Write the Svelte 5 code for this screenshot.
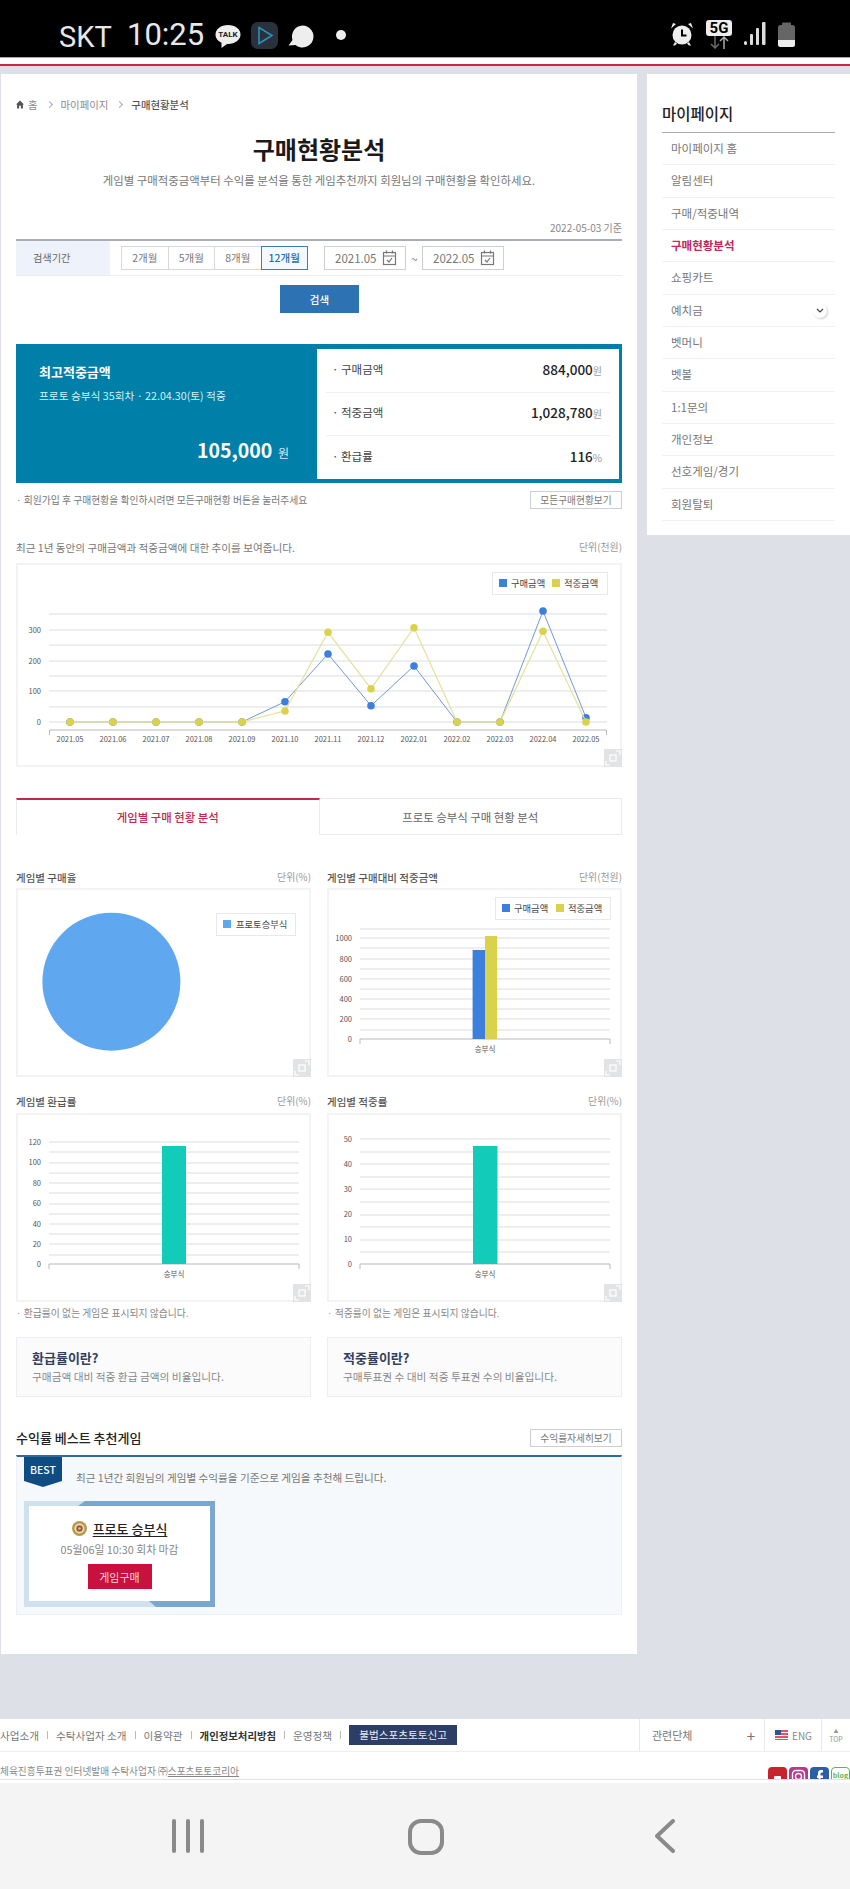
<script>
	const blue = "#3c7fdc";
	const yellow = "#dbd24c";
	const teal = "#13cbb9";

	const menu = ["마이페이지 홈", "알림센터", "구매/적중내역", "구매현황분석", "쇼핑카트", "예치금", "벳머니", "벳볼", "1:1문의", "개인정보", "선호게임/경기", "회원탈퇴"];
	const months = ["2021.05", "2021.06", "2021.07", "2021.08", "2021.09", "2021.10", "2021.11", "2021.12", "2022.01", "2022.02", "2022.03", "2022.04", "2022.05"];
	const buyY = [722, 722, 722, 722, 722, 701.7, 654, 705.7, 666, 722, 722, 611, 717.7];
	const winY = [722, 722, 722, 722, 722, 711, 632.3, 688.7, 627.7, 722, 722, 631.3, 722];
	const pts = (ys) => ys.map((y, i) => `${70 + i * 43},${y}`).join(" ");

	const lineGrid = [614, 630, 645, 661, 676, 691, 707, 722];
	const lineLabels = [["300", 630], ["200", 661], ["100", 691], ["0", 722]];

	const charts = [
		{
			title: "게임별 구매율", unit: "단위(%)", box: [16, 888], pie: true
		},
		{
			title: "게임별 구매대비 적중금액", unit: "단위(천원)", box: [327, 888],
			x1: 360, x2: 610, axis: 1039, catX: 485, catY: 1049, labelX: 352,
			grid: [929, 938, 948, 959, 969, 979, 989, 999, 1009, 1019, 1030],
			labels: [["1000", 938], ["800", 959], ["600", 979], ["400", 999], ["200", 1019], ["0", 1039]],
			bars: [[472.6, 12.4, 950, blue], [485, 12.2, 936, yellow]],
			legend: true
		},
		{
			title: "게임별 환급률", unit: "단위(%)", box: [16, 1113],
			x1: 49, x2: 299, axis: 1264, catX: 174, catY: 1274, labelX: 41,
			grid: [1142, 1152, 1163, 1173, 1183, 1193, 1204, 1214, 1224, 1234, 1244, 1255],
			labels: [["120", 1142], ["100", 1162], ["80", 1183], ["60", 1203], ["40", 1224], ["20", 1244], ["0", 1264]],
			bars: [[162, 24, 1146, teal]],
			note: "환급률이 없는 게임은 표시되지 않습니다."
		},
		{
			title: "게임별 적중률", unit: "단위(%)", box: [327, 1113],
			x1: 360, x2: 610, axis: 1264, catX: 485, catY: 1274, labelX: 352,
			grid: [1139, 1152, 1164, 1177, 1189, 1202, 1215, 1227, 1240, 1252],
			labels: [["50", 1139], ["40", 1164], ["30", 1189], ["20", 1214], ["10", 1239], ["0", 1264]],
			bars: [[473, 24.5, 1146, teal]],
			note: "적중률이 없는 게임은 표시되지 않습니다."
		}
	];

	const summary = [
		{ label: "구매금액", value: "884,000", unit: "원" },
		{ label: "적중금액", value: "1,028,780", unit: "원" },
		{ label: "환급률", value: "116", unit: "%" }
	];
</script>

{#snippet expand()}
	<span class="expand">
		<svg width="18" height="18" viewBox="0 0 18 18" fill="none" stroke="#fff" stroke-width="1.2">
			<rect x="6" y="6" width="6" height="6" />
			<path d="M2 12v4h4M12 2h4v4" />
		</svg>
	</span>
{/snippet}

{#snippet calendar()}
	<svg width="15" height="16" viewBox="0 0 15 16" fill="none" stroke="#777" stroke-width="1.2">
		<rect x="1.5" y="2.5" width="12" height="12" />
		<path d="M1.5 6h12M4.5 .5v3M10.5 .5v3M5 10l2 2 3-4" />
	</svg>
{/snippet}

<div class="page">
	<header class="status">
		<span class="carrier">SKT</span>
		<span class="clock">10:25</span>
		<span class="talk">
			<svg width="26" height="25" viewBox="0 0 26 25"><path d="M13 1C6 1 .5 5 .5 10.5c0 3.800 2.500 6.700 6 8.200L6.500 24l5.500-4.100h1c7 0 12.500-4 12.500-9.400S20 1 13 1z" fill="#eee" /></svg>
			<b>TALK</b>
		</span>
		<span class="play">
			<svg width="27" height="27" viewBox="0 0 27 27"><rect width="27" height="27" rx="7" fill="#28313c" /><path d="M8 5.500l13 8-13 8z" fill="none" stroke="#2f8fb5" stroke-width="1.6" /></svg>
		</span>
		<svg class="bubble" width="26" height="23" viewBox="0 0 26 23"><path d="M14.500 .5a11 11 0 1 1-7 19.500L.500 20.500 4.500 15a11 11 0 0 1 10-14.500z" fill="#eee" /></svg>
		<span class="dot"></span>
		<span class="status-right">
			<svg width="24" height="24" viewBox="0 0 24 24" fill="#eee">
				<circle cx="12" cy="13" r="9.500" />
				<path d="M1 6.500L6 2 3 1zM23 6.500L18 2l3-1zM5 20l-2 3.500h2l2-2zM19 20l2 3.500h-2l-2-2z" />
				<path d="M12 7.500V13.500H16.500" fill="none" stroke="#000" stroke-width="2" />
			</svg>
			<span class="net">
				<b>5G</b>
				<svg width="24" height="13" viewBox="0 0 24 13" fill="none" stroke-width="1.500">
					<path d="M8 0v12M4 8l4 4 4-4" stroke="#6a6a6a" />
					<path d="M17 13V1M13 5l4-4 4 4" stroke="#aaa" />
				</svg>
			</span>
			<svg width="22" height="24" viewBox="0 0 22 24" fill="#ddd">
				<rect x="0" y="19" width="3" height="4" rx="1.500" />
				<rect x="6" y="12" width="3" height="11" rx="1" />
				<rect x="12" y="6" width="3" height="17" rx="1" />
				<rect x="18" y="0" width="3.500" height="23" rx="1" />
			</svg>
			<svg width="17" height="25" viewBox="0 0 17 25">
				<path d="M4 3V1.500a1 1 0 0 1 1-1h7a1 1 0 0 1 1 1V3h1.500A2.500 2.500 0 0 1 17 5.500V18H0V5.500A2.500 2.500 0 0 1 2.500 3z" fill="#666" />
				<path d="M0 18h17v4.500a2.500 2.500 0 0 1-2.500 2.500h-12A2.500 2.500 0 0 1 0 22.500z" fill="#eee" />
			</svg>
		</span>
	</header>
	<div class="topline"></div>

	<div class="layout">
		<main class="main">
			<nav class="crumbs">
				<svg width="8" height="9" viewBox="0 0 9 9" fill="#555"><path d="M4.500 0L9 4.500H7.800V9H5.500V6h-2v3H1.200V4.500H0z" /></svg>
				<span>홈</span>
				<i></i>
				<span>마이페이지</span>
				<i></i>
				<b>구매현황분석</b>
			</nav>
			<h1>구매현황분석</h1>
			<p class="lead">게임별 구매적중금액부터 수익를 분석을 통한 게임추천까지 회원님의 구매현황을 확인하세요.</p>
			<div class="asof">2022-05-03 기준</div>

			<div class="search">
				<div class="search-label">검색기간</div>
				<div class="periods">
					<span>2개월</span><span>5개월</span><span>8개월</span><span class="on">12개월</span>
				</div>
				<div class="date">2021.05 {@render calendar()}</div>
				<span class="tilde">~</span>
				<div class="date">2022.05 {@render calendar()}</div>
			</div>
			<button class="go">검색</button>

			<section class="panel">
				<div class="best">
					<strong>최고적중금액</strong>
					<small>프로토 승부식 35회차 · 22.04.30(토) 적중</small>
					<div class="best-amount"><b>105,000</b> <span>원</span></div>
				</div>
				<ul class="totals">
					{#each summary as row}
						<li><span>· {row.label}</span><span class="num"><b>{row.value}</b><em>{row.unit}</em></span></li>
					{/each}
				</ul>
			</section>

			<div class="note-row">
				<span>· 회원가입 후 구매현황을 확인하시려면 모든구매현황 버튼을 눌러주세요</span>
				<button class="ghost">모든구매현황보기</button>
			</div>

			<div class="caption"><span>최근 1년 동안의 구매금액과 적중금액에 대한 추이를 보여줍니다.</span><span class="unit">단위(천원)</span></div>

			<div class="box line-box">
				<svg width="606" height="204" viewBox="16 563 606 204">
					<rect x="492.500" y="572.500" width="115" height="22" fill="#fff" stroke="#e6e8ec" />
					<rect x="499" y="579" width="8" height="8" fill={blue} />
					<text x="511" y="587" class="lg">구매금액</text>
					<rect x="552" y="579" width="8" height="8" fill={yellow} />
					<text x="564" y="587" class="lg">적중금액</text>
					{#each lineGrid as y}
						<line x1="49" x2="607" y1={y} y2={y} stroke="#e6e8ea" stroke-width="1.300" />
					{/each}
					{#each lineLabels as [t, y]}
						<text x="41" y={y + 3} text-anchor="end" class="tick">{t}</text>
					{/each}
					<path d="M49.500 735v-5h557v5" fill="none" stroke="#b5b9bd" />
					{#each months as m, i}
						<text x={70 + i * 43} y="742" text-anchor="middle" class="tick">{m}</text>
					{/each}
					<polyline points={pts(buyY)} fill="none" stroke="#6f9bd3" />
					{#each buyY as y, i}
						<circle cx={70 + i * 43} cy={y} r="3.800" fill={blue} />
					{/each}
					<polyline points={pts(winY)} fill="none" stroke="#e6e3a2" stroke-width="1.300" />
					{#each winY as y, i}
						<circle cx={70 + i * 43} cy={y} r="3.800" fill={yellow} />
					{/each}
				</svg>
				{@render expand()}
			</div>

			<div class="tabs">
				<span class="tab active">게임별 구매 현황 분석</span>
				<span class="tab">프로토 승부식 구매 현황 분석</span>
			</div>

			<div class="chart-grid">
				{#each charts as c}
					<div class="col">
						<div class="col-head"><b>{c.title}</b><span class="unit">{c.unit}</span></div>
						<div class="box">
							<svg width="295" height="189" viewBox="{c.box[0]} {c.box[1]} 295 189">
								{#if c.pie}
									<circle cx="111.400" cy="981.700" r="69" fill="#5fa8ef" />
									<rect x="216.500" y="913.500" width="79" height="22" fill="#fff" stroke="#e6e8ec" />
									<rect x="223" y="920" width="8" height="8" fill="#5fa8ef" />
									<text x="236" y="928" class="lg">프로토승부식</text>
								{:else}
									{#if c.legend}
										<rect x="495.500" y="897.500" width="115" height="22" fill="#fff" stroke="#e6e8ec" />
										<rect x="502" y="904" width="8" height="8" fill={blue} />
										<text x="514" y="912" class="lg">구매금액</text>
										<rect x="556" y="904" width="8" height="8" fill={yellow} />
										<text x="568" y="912" class="lg">적중금액</text>
									{/if}
									{#each c.grid as y}
										<line x1={c.x1} x2={c.x2} y1={y} y2={y} stroke="#e6e8ea" stroke-width="1.300" />
									{/each}
									{#each c.labels as [t, y]}
										<text x={c.labelX} y={y + 3} text-anchor="end" class="tick">{t}</text>
									{/each}
									<path d="M{c.x1} {c.axis + 5}v-5H{c.x2}v5" fill="none" stroke="#b5b9bd" />
									{#each c.bars as [x, w, y, fill]}
										<rect {x} {y} width={w} height={c.axis - y} {fill} />
									{/each}
									<text x={c.catX} y={c.catY + 3} text-anchor="middle" class="tick">승부식</text>
								{/if}
							</svg>
							{@render expand()}
						</div>
						{#if c.note}
							<p class="small-note">· {c.note}</p>
						{/if}
					</div>
				{/each}
			</div>

			<div class="info-grid">
				<div class="info"><h3>환급률이란?</h3><p>구매금액 대비 적중 환급 금액의 비율입니다.</p></div>
				<div class="info"><h3>적중률이란?</h3><p>구매투표권 수 대비 적중 투표권 수의 비율입니다.</p></div>
			</div>

			<div class="rec-head">
				<h2>수익률 베스트 추천게임</h2>
				<button class="ghost">수익률자세히보기</button>
			</div>
			<section class="rec">
				<div class="rec-top">
					<div class="ribbon">BEST</div>
					<p>최근 1년간 회원님의 게임별 수익률을 기준으로 게임을 추천해 드립니다.</p>
				</div>
				<div class="rec-card">
					<svg class="frame" width="191" height="106" viewBox="0 0 191 106">
						<path d="M0 0h191v106H0z" fill="#cfe0ef" />
						<path d="M61 0h130v106h-59l-7-6h61V5H54z" fill="#7ba7cf" />
						<rect x="5" y="5" width="181" height="95" fill="#fff" />
					</svg>
					<div class="game">
						<svg width="15" height="15" viewBox="0 0 15 15">
							<circle cx="7.500" cy="7.500" r="7.500" fill="#b49a4e" />
							<circle cx="7.500" cy="7.500" r="5" fill="#e9e0c0" />
							<circle cx="7.500" cy="7.500" r="3.200" fill="#a5552f" />
							<circle cx="7.500" cy="7.500" r="1.300" fill="#d8c27c" />
						</svg>
						<b>프로토 승부식</b>
					</div>
					<div class="deadline">05월06일 10:30 회차 마감</div>
					<button class="buy">게임구매</button>
				</div>
			</section>
		</main>

		<aside class="side">
			<h2>마이페이지</h2>
			<ul>
				{#each menu as item, i}
					<li class:current={i === 3}>
						{item}
						{#if i === 5}
							<span class="chev">
								<svg width="8" height="6" viewBox="0 0 8 6" fill="none" stroke="#444" stroke-width="1.200"><path d="M1 1l3 3 3-3" /></svg>
							</span>
						{/if}
					</li>
				{/each}
			</ul>
		</aside>
	</div>

	<footer class="footer">
		<div class="foot-top">
			<div class="foot-links">
				<span>사업소개</span><i></i><span>수탁사업자 소개</span><i></i><span>이용약관</span><i></i><b>개인정보처리방침</b><i></i><span>운영정책</span><i></i>
				<span class="report">불법스포츠토토신고</span>
			</div>
			<div class="related"><span>관련단체</span><span class="plus">+</span></div>
			<div class="eng">
				<svg width="13" height="10" viewBox="0 0 13 10">
					<rect width="13" height="10" fill="#d9566b" />
					<path d="M0 2.500h13M0 5.500h13M0 8.500h13" stroke="#f2f2f2" />
					<rect width="6" height="5" fill="#35508f" />
				</svg>
				ENG
			</div>
			<div class="top"><span>▲</span>TOP</div>
		</div>
		<div class="foot-bottom">
			<span>체육진흥투표권 인터넷발매 수탁사업자 ㈜<u>스포츠토토코리아</u></span>
			<div class="social">
				<svg width="19" height="22" viewBox="0 0 19 22"><rect width="19" height="22" rx="4" fill="#c8232c" /><rect x="6" y="9" width="7" height="6" rx="1" fill="#fff" /></svg>
				<svg width="19" height="22" viewBox="0 0 19 22"><rect width="19" height="22" rx="4" fill="#b5398f" /><rect x="3.500" y="3.500" width="12" height="12" rx="3.500" fill="none" stroke="#fff" stroke-width="1.400" /><circle cx="9.500" cy="9.500" r="3" fill="none" stroke="#fff" stroke-width="1.400" /></svg>
				<svg width="19" height="22" viewBox="0 0 19 22"><rect width="19" height="22" rx="4" fill="#2c5ea8" /><path d="M10.500 22V11H13v-2.500h-2.500V7c0-1 .5-1.500 1.500-1.500h1V3h-2c-2.200 0-3 1.500-3 3.500v2H7V11h1.500v11z" fill="#fff" /></svg>
				<span class="blog">blog</span>
			</div>
		</div>
	</footer>

	<div class="navbar">
		<svg width="32" height="34" viewBox="0 0 32 34" stroke="#8a8a8a" stroke-width="4" stroke-linecap="round"><path d="M2 2v30M16 2v30M30 2v30" /></svg>
		<svg width="36" height="36" viewBox="0 0 36 36" fill="none" stroke="#8a8a8a" stroke-width="4"><rect x="2" y="2" width="32" height="32" rx="11" /></svg>
		<svg width="20" height="34" viewBox="0 0 20 34" fill="none" stroke="#8a8a8a" stroke-width="4" stroke-linecap="round" stroke-linejoin="round"><path d="M18 2L2 17l16 15" /></svg>
	</div>
</div>

<style>
	:global(body) {
		margin: 0;
		background: #dde0e6;
	}
	.page {
		width: 850px;
		height: 1889px;
		overflow: hidden;
		display: flex;
		flex-direction: column;
		background: #dde0e6;
		font-family: "Noto Sans CJK KR", "Noto Sans", sans-serif;
		color: #777;
		font-size: 12px;
	}
	button {
		font-family: inherit;
		padding: 0;
		cursor: pointer;
	}
	h1, h2, h3, p, ul {
		margin: 0;
		padding: 0;
	}
	ul {
		list-style: none;
	}

	/* phone status bar */
	.status {
		height: 57px;
		background: #000;
		display: flex;
		align-items: center;
		padding-left: 59px;
		font-family: Roboto, sans-serif;
		color: #e8e8e8;
		flex: none;
	}
	.carrier {
		font-size: 29px;
		width: 68px;
		margin-top: 16px;
	}
	.clock {
		font-size: 31px;
		width: 88px;
		margin-top: 12px;
	}
	.talk {
		position: relative;
		width: 36px;
		height: 25px;
		margin-top: 15px;
	}
	.talk b {
		position: absolute;
		left: 2px;
		top: 6px;
		width: 22px;
		text-align: center;
		font-size: 8px;
		color: #222;
	}
	.play {
		width: 37px;
		height: 27px;
		margin-top: 14px;
	}
	.bubble {
		margin-top: 15px;
	}
	.dot {
		width: 10px;
		height: 10px;
		border-radius: 50%;
		background: #eee;
		margin: 13px 0 0 22px;
	}
	.status-right {
		margin-left: auto;
		margin-right: 55px;
		margin-top: 11px;
		display: flex;
		align-items: center;
		gap: 12px;
	}
	.net {
		display: flex;
		flex-direction: column;
		align-items: center;
	}
	.net b {
		width: 26px;
		height: 16px;
		background: #eee;
		color: #000;
		border-radius: 3px;
		font-size: 15px;
		line-height: 16px;
		text-align: center;
	}
	.topline {
		height: 11px;
		flex: none;
		background: #fff;
		border-top: 1px solid #aaa;
		box-sizing: border-box;
		background-image: linear-gradient(#fff 6px, #c7264c 6px, #c7264c 8px, #f3d9df 8px);
	}

	.layout {
		display: flex;
		gap: 10px;
		margin-top: 6px;
		margin-left: 1px;
		flex: none;
		height: 1580px;
	}
	.main {
		width: 636px;
		height: 1580px;
		box-sizing: border-box;
		background: #fff;
		padding: 20px 15px 0;
	}

	.crumbs {
		height: 20px;
		display: flex;
		align-items: center;
		gap: 4px;
		font-size: 10.400px;
		color: #8a8a8a;
	}
	.crumbs i {
		width: 4px;
		height: 4px;
		border-top: 1px solid #aaa;
		border-right: 1px solid #aaa;
		transform: rotate(45deg);
		margin: 0 5px;
	}
	.crumbs b {
		color: #555;
		font-weight: 500;
	}
	h1 {
		margin-top: 20px;
		height: 30px;
		line-height: 30px;
		text-align: center;
		font-size: 24px;
		font-weight: 700;
		color: #1a1a1a;
	}
	.lead {
		margin-top: 6px;
		height: 20px;
		line-height: 20px;
		text-align: center;
		font-size: 11.400px;
		color: #777;
	}
	.asof {
		margin-top: 30px;
		height: 16px;
		line-height: 16px;
		text-align: right;
		font-size: 10px;
		color: #888;
	}

	.search {
		margin-top: 3px;
		height: 37px;
		box-sizing: border-box;
		border-top: 2px solid #a9adb5;
		border-bottom: 1px solid #eceef1;
		display: flex;
		align-items: center;
	}
	.search-label {
		width: 94px;
		height: 34px;
		line-height: 34px;
		background: #eef2fa;
		padding-left: 17px;
		box-sizing: border-box;
		font-size: 10.200px;
		color: #666;
	}
	.periods {
		margin-left: 12px;
		display: flex;
		width: 186px;
	}
	.periods span {
		flex: 1;
		height: 24px;
		line-height: 22px;
		box-sizing: border-box;
		border: 1px solid #d5d8dd;
		margin-left: -1px;
		text-align: center;
		font-size: 10.500px;
		color: #777;
	}
	.periods .on {
		border-color: #3a7fb8;
		color: #2a6fa8;
		background: #f3f9fd;
		font-weight: 500;
		position: relative;
	}
	.date {
		margin-left: 16px;
		width: 82px;
		height: 24px;
		box-sizing: border-box;
		border: 1px solid #ccd0d5;
		display: flex;
		align-items: center;
		justify-content: space-between;
		padding: 0 8px 0 10px;
		font-size: 11.500px;
		color: #777;
	}
	.tilde {
		margin: 0 -11px 0 5px;
		width: 6px;
		color: #777;
	}
	.go {
		display: block;
		margin: 9px 0 0 264px;
		width: 79px;
		height: 28px;
		background: #2d72b2;
		border: 0;
		color: #fff;
		font-size: 10.500px;
		font-weight: 500;
	}

	.panel {
		margin-top: 31px;
		height: 139px;
		background: #0080a8;
		display: flex;
		box-sizing: border-box;
		padding: 5px 3px 4px 0;
	}
	.best {
		width: 301px;
		box-sizing: border-box;
		padding: 9px 28px 0 23px;
		color: #fff;
		display: flex;
		flex-direction: column;
	}
	.best strong {
		font-size: 13px;
		font-weight: 700;
		line-height: 28px;
		height: 28px;
	}
	.best small {
		margin-top: 2px;
		font-size: 10.700px;
		line-height: 16px;
		height: 16px;
		color: #d6eef6;
	}
	.best-amount {
		margin-top: 31px;
		text-align: right;
		line-height: 30px;
	}
	.best-amount b {
		font-size: 19.500px;
	}
	.best-amount span {
		font-size: 12px;
		margin-left: 3px;
		color: #d6eef6;
	}
	.totals {
		flex: 1;
		background: #fff;
		padding: 0 9px;
	}
	.totals li {
		height: 43.500px;
		box-sizing: border-box;
		display: flex;
		justify-content: space-between;
		align-items: center;
		padding: 0 8px 3px 6px;
		font-size: 11.500px;
		color: #444;
		border-bottom: 1px solid #f0f1f3;
	}
	.totals li:last-child {
		border-bottom: 0;
	}
	.num b {
		font-weight: 500;
		font-size: 13.500px;
		color: #222;
	}
	.num em {
		font-style: normal;
		font-size: 10px;
		color: #999;
	}

	.note-row {
		margin-top: 8px;
		height: 18px;
		display: flex;
		justify-content: space-between;
		align-items: center;
		font-size: 9.800px;
		color: #777;
	}
	.ghost {
		width: 92px;
		height: 18px;
		background: #fff;
		border: 1px solid #ccd0d5;
		font-size: 9.700px;
		color: #777;
		line-height: 14px;
	}
	.caption {
		margin-top: 30px;
		height: 16px;
		display: flex;
		justify-content: space-between;
		align-items: center;
		font-size: 10.600px;
		color: #777;
	}
	.unit {
		font-size: 9.900px;
		color: #999;
	}
	.box {
		position: relative;
		background: #fff;
		box-shadow: inset 0 0 0 2px #f2f3f5;
		height: 189px;
		line-height: 0;
	}
	.line-box {
		margin-top: 8px;
		height: 204px;
	}
	.expand {
		position: absolute;
		right: 0;
		bottom: 0;
		width: 18px;
		height: 18px;
		background: #e2e3e5;
	}
	.lg {
		font-size: 9.300px;
		fill: #444;
	}
	.tick {
		font-size: 7.500px;
		fill: #555;
	}

	.tabs {
		margin-top: 31px;
		height: 37px;
		display: flex;
	}
	.tab {
		flex: 1;
		box-sizing: border-box;
		border: 1px solid #e9ebee;
		border-left: 0;
		text-align: center;
		line-height: 36px;
		font-size: 11.400px;
		color: #666;
	}
	.tab.active {
		border: 1px solid #e9ebee;
		border-top: 2px solid #c7264c;
		border-bottom: 0;
		color: #c7264c;
		font-weight: 500;
		line-height: 35px;
	}

	.chart-grid {
		margin-top: 34px;
		display: grid;
		grid-template-columns: 295px 295px;
		column-gap: 16px;
		row-gap: 16px;
	}
	.col-head {
		height: 16px;
		margin-bottom: 3px;
		display: flex;
		justify-content: space-between;
		align-items: center;
		font-size: 10.500px;
		color: #555;
	}
	.col-head b {
		font-weight: 500;
	}
	.chart-grid .col:nth-child(n+3) .col-head {
		margin-bottom: 4px;
	}
	.small-note {
		margin-top: 4px;
		height: 14px;
		line-height: 14px;
		font-size: 9.800px;
		color: #888;
	}

	.info-grid {
		margin-top: 17px;
		display: grid;
		grid-template-columns: 295px 295px;
		column-gap: 16px;
	}
	.info {
		height: 60px;
		box-sizing: border-box;
		background: #fbfbfc;
		border: 1px solid #eceef1;
		padding: 9px 15px 0;
	}
	.info h3 {
		font-size: 13px;
		line-height: 22px;
		font-weight: 700;
		color: #33405c;
	}
	.info p {
		font-size: 10.700px;
		line-height: 16px;
		color: #888;
	}

	.rec-head {
		margin-top: 32px;
		height: 17px;
		display: flex;
		justify-content: space-between;
		align-items: center;
	}
	.rec-head h2 {
		font-size: 13px;
		font-weight: 500;
		color: #222;
	}
	.rec {
		margin-top: 9px;
		height: 160px;
		box-sizing: border-box;
		border: 1px solid #edf0f4;
		border-top: 2px solid #2f6a9b;
		background: #f6f9fc;
		padding-left: 7px;
	}
	.rec-top {
		display: flex;
		height: 44px;
	}
	.ribbon {
		width: 38px;
		height: 30px;
		background: #0f4c81;
		clip-path: polygon(0 0, 100% 0, 100% 80%, 50% 100%, 0 80%);
		color: #fff;
		text-align: center;
		font-size: 10.500px;
		font-weight: 500;
		line-height: 26px;
	}
	.rec-top p {
		margin: 12px 0 0 14px;
		font-size: 10.600px;
		line-height: 18px;
		color: #777;
	}
	.rec-card {
		position: relative;
		width: 191px;
		height: 106px;
		display: flex;
		flex-direction: column;
		align-items: center;
	}
	.frame {
		position: absolute;
		left: 0;
		top: 0;
	}
	.game {
		position: relative;
		margin-top: 17px;
		height: 20px;
		display: flex;
		align-items: center;
		gap: 6px;
	}
	.game b {
		font-size: 13px;
		font-weight: 500;
		color: #222;
		text-decoration: underline;
		text-underline-offset: 2px;
	}
	.deadline {
		position: relative;
		margin-top: 2px;
		height: 18px;
		line-height: 18px;
		font-size: 10.800px;
		color: #888;
	}
	.buy {
		position: relative;
		margin-top: 6px;
		width: 64px;
		height: 25px;
		background: #c9103f;
		border: 0;
		color: #f5d8df;
		font-size: 11px;
	}

	.side {
		width: 203px;
		height: 461px;
		box-sizing: border-box;
		background: #fff;
		padding: 28px 15px 0;
		align-self: flex-start;
	}
	.side h2 {
		height: 30px;
		line-height: 22px;
		font-size: 15.500px;
		font-weight: 500;
		color: #222;
		border-bottom: 1px solid #aaa;
	}
	.side li {
		position: relative;
		height: 32.350px;
		box-sizing: border-box;
		line-height: 30px;
		padding-left: 9px;
		font-size: 11.500px;
		color: #777;
		border-bottom: 1px solid #f1f2f4;
	}
	.side li.current {
		color: #c2285a;
		font-weight: 700;
	}
	.chev {
		position: absolute;
		right: 8px;
		top: 9px;
		width: 14px;
		height: 14px;
		border-radius: 50%;
		box-shadow: 1px 1px 2px #ccc;
		display: flex;
		align-items: center;
		justify-content: center;
	}

	.footer {
		margin-top: 65px;
		height: 64px;
		background: #fff;
		flex: none;
		overflow: hidden;
	}
	.foot-top {
		height: 32px;
		display: flex;
		border-bottom: 1px solid #eceef1;
	}
	.foot-links {
		width: 639px;
		display: flex;
		align-items: center;
		font-size: 10.600px;
		color: #777;
	}
	.foot-links b {
		color: #333;
		font-weight: 700;
		font-size: 10.400px;
	}
	.foot-links i {
		width: 1px;
		height: 8px;
		background: #bbb;
		margin: 0 8px;
	}
	.report {
		width: 108px;
		height: 20px;
		line-height: 19px;
		text-align: center;
		background: #2c3e66;
		color: #e9edf5;
	}
	.related {
		width: 126px;
		box-sizing: border-box;
		border: 1px solid #e6e8ec;
		border-width: 0 1px;
		display: flex;
		justify-content: space-between;
		align-items: center;
		padding: 0 9px 0 12px;
		font-size: 11px;
	}
	.plus {
		font-size: 15px;
	}
	.eng {
		width: 57px;
		box-sizing: border-box;
		border-right: 1px solid #e6e8ec;
		display: flex;
		align-items: center;
		gap: 4px;
		padding-left: 10px;
		font-size: 10px;
		color: #888;
	}
	.top {
		flex: 1;
		display: flex;
		flex-direction: column;
		align-items: center;
		justify-content: center;
		font-size: 7px;
		color: #999;
	}
	.top span {
		font-size: 5px;
	}
	.foot-bottom {
		height: 28px;
		overflow: hidden;
		display: flex;
		justify-content: space-between;
		padding-top: 11px;
		box-sizing: border-box;
		font-size: 9.700px;
		color: #888;
		line-height: 16px;
		border-bottom: 1px solid #dfe1e5;
	}
	.social {
		display: flex;
		gap: 2px;
		margin-top: 4px;
		height: 22px;
	}
	.blog {
		width: 19px;
		height: 22px;
		box-sizing: border-box;
		border: 1.500px solid #5fb548;
		border-radius: 4px;
		background: #fff;
		color: #5fb548;
		font-size: 7px;
		font-weight: 700;
		text-align: center;
		line-height: 14px;
	}
	.navbar {
		flex: 1;
		background: #f4f4f4;
		display: grid;
		grid-template-columns: 32px 36px 20px;
		column-gap: 204px;
		justify-content: start;
		padding: 36px 0 0 172px;
		align-content: start;
	}
	.navbar svg:last-child {
		margin-left: 7px;
	}
</style>
